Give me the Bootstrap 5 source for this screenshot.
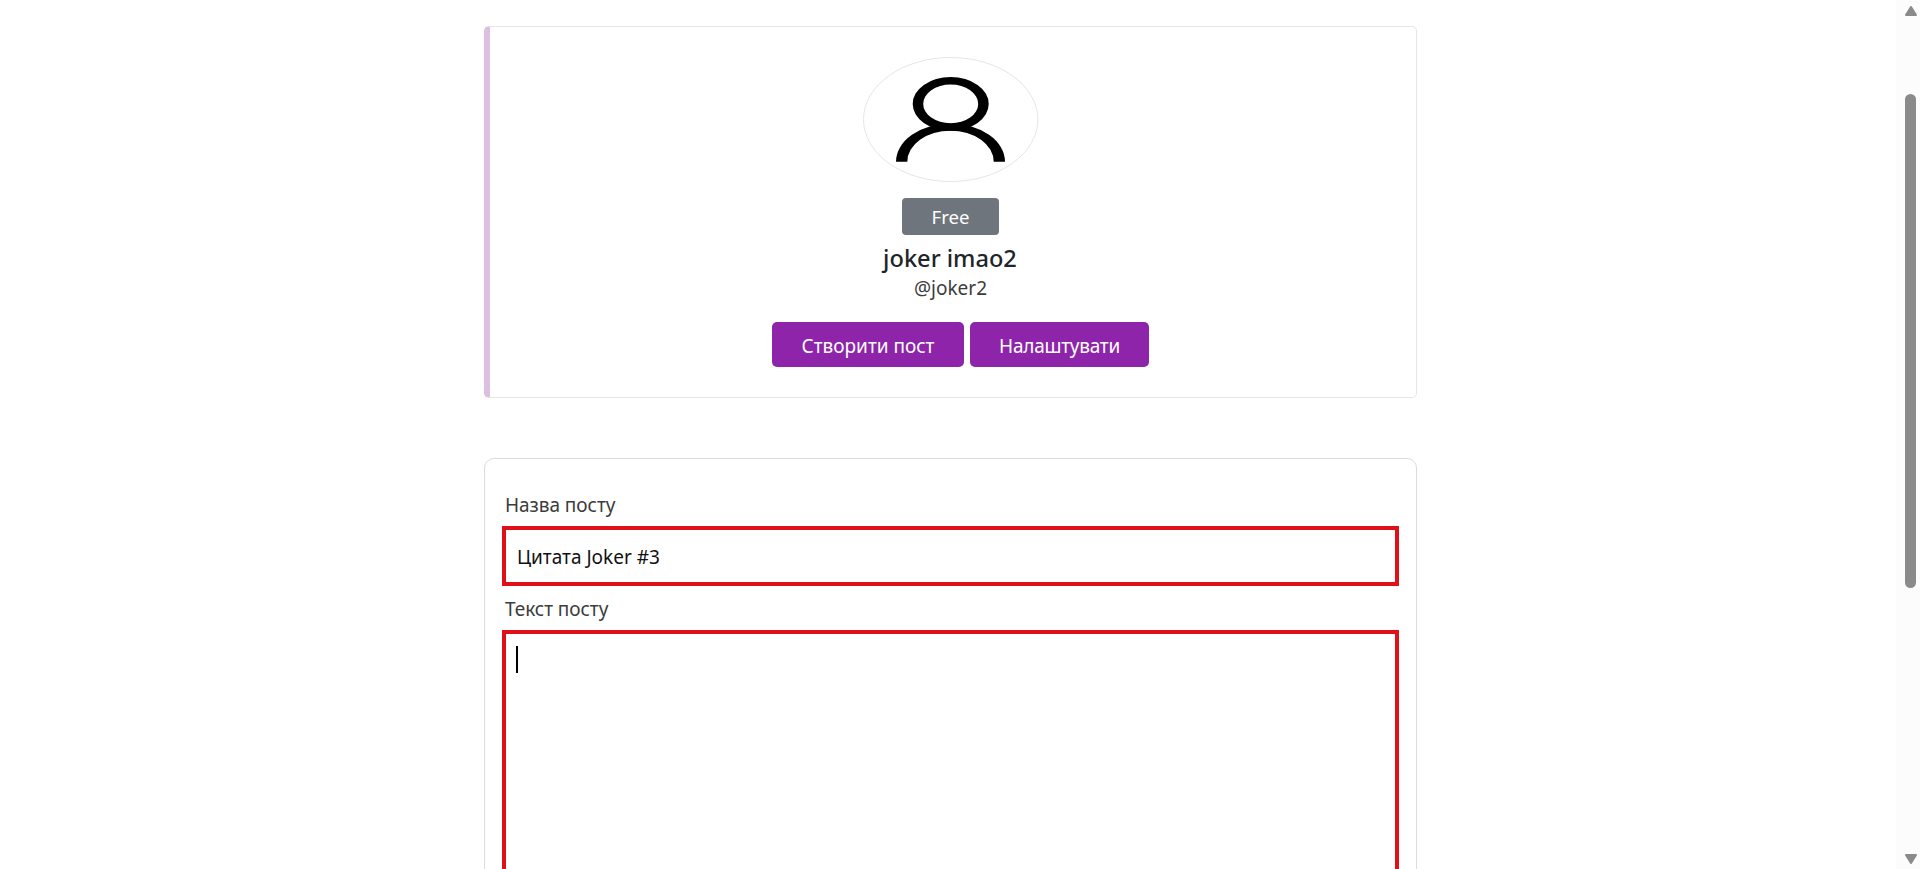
<!DOCTYPE html>
<html lang="uk">
<head>
<meta charset="utf-8">
<meta name="viewport" content="width=device-width, initial-scale=1">
<title>joker imao2</title>
<link href="https://cdn.jsdelivr.net/npm/bootstrap@5.3.0/dist/css/bootstrap.min.css" rel="stylesheet">
<style>
  body { font-family: "Noto Sans", sans-serif; font-size: 19px; line-height: 30px; color: #212529; background: #fff; }
  .feed { width: 933px; margin-left: 484px; padding-top: 26px; }
  .profile { height: 372px; border: 1px solid #e6e6e6; border-left: 6px solid #dcc0e2; border-radius: 5px; padding-top: 30px; }
  .avatar { width: 176px; height: 125px; display: block; margin-left: 372.5px; }
  .plan { width: 97px; height: 37px; margin: 16px 0 0 412px; border-radius: 4px; background: #6f757d; color: #fff; padding-top: 4px; line-height: 30px; font-size: 18.6px; }
  .fullname { font-size: 23.6px; font-weight: 500; line-height: 30px; margin: 8px 0 0; width: 920px; }
  .handle { width: 921px; color: #3c3c3c; line-height: 30px; margin-bottom: 19px; }
  .btn-violet { --bs-btn-color: #fff; --bs-btn-bg: #8e24aa; --bs-btn-hover-color: #fff; --bs-btn-hover-bg: #7b1fa2; --bs-btn-border-width: 0; --bs-btn-border-radius: 5px; --bs-btn-font-size: 19px; --bs-btn-padding-x: 0; --bs-btn-padding-y: 0; height: 45px; line-height: 48px; }
  .btn-create { width: 192px; }
  .btn-setup { width: 179px; letter-spacing: -.25px; }
  .actions { gap: 6px; padding-left: 282px; }
  .compose { height: 700px; margin-top: 60px; border: 1px solid #dcdcdc; border-radius: 10px; padding: 31px 17px 0; }
  .compose label { display: block; height: 36px; padding-left: 3px; color: #3c3c3c; letter-spacing: -.05px; }
  .field { width: 897px; border: 4px solid #e01019; border-radius: 0; font-size: 19px; color: #111; padding: 0 11px; }
  .title-field { height: 60px; padding-top: 1px; margin-bottom: 8px; }
  .body-field { height: 560px; padding: 12px 10px; }
  .caret { width: 2px; height: 27px; background: #000; }
  .scroller { width: 24px; background: #fcfcfc; padding: 6px 0 5px 8px; }
  .thumb { width: 11px; height: 494px; margin: 78px 0 0 1px; border-radius: 6px; background: #8a8a8a; }
</style>
</head>
<body>
<div class="d-flex vh-100 overflow-hidden">
  <main class="flex-grow-1">
    <div class="feed">
      <section class="profile">
        <svg class="avatar" viewBox="0 0 176 125">
          <ellipse cx="87.7" cy="62.5" rx="87.2" ry="62" fill="#fff" stroke="#e6e6e6"/>
          <path fill-rule="evenodd" d="M49.7 46.9a38 26.9 0 1 0 76 0a38 26.9 0 1 0-76 0zM60.2 46.9a27.5 19.4 0 1 0 55 0a27.5 19.4 0 1 0-55 0z"/>
          <path d="M33 104.7A54.5 38 0 0 1 142 104.7H130.7A43.2 31 0 0 0 44.3 104.7z"/>
        </svg>
        <div class="plan text-center">Free</div>
        <h1 class="fullname text-center">joker imao2</h1>
        <div class="handle text-center">@joker2</div>
        <div class="actions d-flex">
          <button class="btn btn-violet btn-create">Створити пост</button>
          <button class="btn btn-violet btn-setup">Налаштувати</button>
        </div>
      </section>
      <section class="compose">
        <label for="title">Назва посту</label>
        <input id="title" class="field title-field d-block" value="Цитата Joker #3">
        <label>Текст посту</label>
        <div class="field body-field"><div class="caret"></div></div>
      </section>
    </div>
  </main>
  <aside class="scroller d-flex flex-column">
    <svg width="14" height="10" viewBox="0 0 14 10"><path d="M7 1L12 9H2z" fill="#8a8a8a" stroke="#8a8a8a" stroke-width="2" stroke-linejoin="round"/></svg>
    <div class="thumb"></div>
    <svg class="mt-auto" width="14" height="10" viewBox="0 0 14 10"><path d="M2 1H12L7 9z" fill="#8a8a8a" stroke="#8a8a8a" stroke-width="2" stroke-linejoin="round"/></svg>
  </aside>
</div>
<script src="https://cdn.jsdelivr.net/npm/bootstrap@5.3.0/dist/js/bootstrap.bundle.min.js"></script>
</body>
</html>
